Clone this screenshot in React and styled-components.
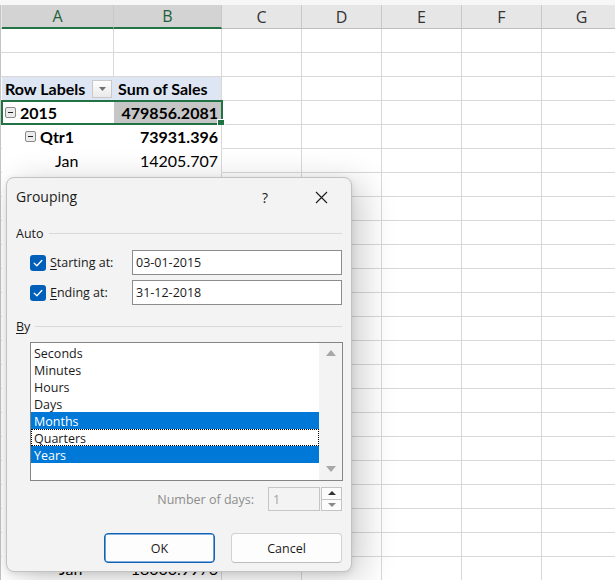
import React from 'react';
import styled, { createGlobalStyle, css } from 'styled-components';

const Global = createGlobalStyle`
  html, body { margin: 0; padding: 0; background: #fff; overflow: hidden; }
  #root { width: 615px; height: 580px; }
`;

const COLS = '2px 112px 108px 80px 80px 80px 80px 80px';
const GRID = '#d8d8d8';

const Page = styled.div`
  position: relative;
  width: 615px;
  height: 580px;
  overflow: hidden;
  background: #fff;
`;

const Sheet = styled.div`
  display: flex;
  flex-direction: column;
`;

const TopStrip = styled.div`
  height: 5px;
  background: #f7f7f7;
`;

const HeaderRow = styled.div`
  display: grid;
  grid-template-columns: ${COLS};
  height: 24px;
  background: #e6e6e6;
`;

const ColHead = styled.div`
  box-sizing: border-box;
  display: flex;
  align-items: center;
  justify-content: center;
  font-family: "Open Sans", "Noto Sans", sans-serif;
  font-size: 16px;
  border-right: 1px solid #c8c8c8;
  color: ${p => (p.$sel ? '#1f5f3c' : '#333')};
  background: ${p => (p.$sel ? '#d3d3d3' : '#e6e6e6')};
  border-bottom: ${p => (p.$sel ? '2px solid #217346' : '1px solid #bdbdbd')};
`;

const Row = styled.div`
  position: relative;
  display: grid;
  grid-template-columns: ${COLS};
  height: 24px;
`;

const Cell = styled.div`
  box-sizing: border-box;
  height: 24px;
  display: flex;
  align-items: center;
  gap: 4px;
  padding: 0 3px;
  overflow: hidden;
  white-space: nowrap;
  font-family: Lato, "Liberation Sans", Arial, sans-serif;
  font-size: 16px;
  color: #000;
  border-right: 1px solid ${GRID};
  border-bottom: 1px solid ${GRID};
  justify-content: ${p => (p.$right ? 'flex-end' : 'flex-start')};
  font-weight: ${p => (p.$bold ? 700 : 400)};
  background: ${p => p.$bg || '#fff'};
  padding-left: ${p => (p.$indent != null ? `${p.$indent}px` : '3px')};
  ${p => p.$open && css`border-right-color: transparent;`}
  ${p => p.$flat && css`border-bottom-color: transparent;`}
`;

const EdgeCell = styled.div`
  box-sizing: border-box;
  border-left: 1px solid #c4c4c4;
  border-bottom: 1px solid ${GRID};
  background: #fff;
`;

const HeadEdge = styled.div`
  box-sizing: border-box;
  border-left: 1px solid #c4c4c4;
  border-bottom: 1px solid #bdbdbd;
  background: #e6e6e6;
`;

const Selection = styled.div`
  position: absolute;
  left: 1px;
  top: -1px;
  width: 222px;
  height: 25px;
  box-sizing: border-box;
  border: 2px solid #217346;
  pointer-events: none;
`;

const FillHandle = styled.div`
  position: absolute;
  right: -4px;
  bottom: -4px;
  width: 6px;
  height: 6px;
  background: #217346;
  border: 1px solid #fff;
`;

const MinusBox = styled.span`
  position: relative;
  flex: none;
  width: 11px;
  height: 11px;
  box-sizing: border-box;
  border: 1px solid #8a8a8a;
  border-radius: 2px;
  background: #ececec;
  &::after {
    content: '';
    position: absolute;
    left: 2px;
    right: 2px;
    top: 4px;
    height: 1px;
    background: #222;
  }
`;

const LabelText = styled.span`
  flex: 1;
`;

const FilterButton = styled.span`
  flex: none;
  width: 20px;
  height: 18px;
  box-sizing: border-box;
  border: 1px solid #c9c9c9;
  background: linear-gradient(#fdfdfd, #eaeaea);
  display: flex;
  align-items: center;
  justify-content: center;
  margin-right: -2px;
`;

/* ---------- Dialog ---------- */

const Dialog = styled.div`
  position: absolute;
  left: 6px;
  top: 177px;
  width: 346px;
  box-sizing: border-box;
  background: #f3f3f3;
  border: 1px solid #c2c2c2;
  border-radius: 8px;
  box-shadow: 10px 6px 34px rgba(0, 0, 0, 0.2), 0 2px 6px rgba(0, 0, 0, 0.1);
  display: flex;
  flex-direction: column;
  font-family: "Open Sans", "Noto Sans", sans-serif;
  font-size: 12.5px;
  color: #1a1a1a;
`;

const TitleBar = styled.div`
  height: 39px;
  display: flex;
  align-items: center;
  padding: 0 18px 0 9px;
`;

const Title = styled.div`
  flex: 1;
  font-size: 14px;
  color: #1a1a1a;
  padding-bottom: 2px;
`;

const TitleButton = styled.div`
  width: 24px;
  height: 24px;
  display: flex;
  align-items: center;
  justify-content: center;
  font-size: 14px;
  color: #1a1a1a;
  margin-left: ${p => p.$gap || 0}px;
`;

const Body = styled.div`
  display: flex;
  flex-direction: column;
  padding: 0 9px 8px 9px;
`;

const GroupLabel = styled.div`
  display: flex;
  align-items: center;
  height: 16px;
  margin-top: ${p => p.$mt}px;
  &::after {
    content: '';
    flex: 1;
    height: 1px;
    background: #d9d9d9;
    margin-left: 5px;
  }
`;

const FieldRow = styled.div`
  display: flex;
  align-items: center;
  height: 25px;
  padding-left: 14px;
  margin-top: ${p => p.$mt}px;
`;

const CheckBox = styled.span`
  flex: none;
  width: 16px;
  height: 16px;
  border-radius: 3px;
  background: #005fb8;
  display: flex;
  align-items: center;
  justify-content: center;
  margin-right: 4px;
`;

const FieldLabel = styled.span`
  width: 82px;
`;

const Key = styled.span`
  text-decoration: underline;
  text-underline-offset: 2px;
`;

const TextInput = styled.div`
  flex: 1;
  height: 25px;
  box-sizing: border-box;
  border: 1px solid #8c8c8c;
  background: #fff;
  display: flex;
  align-items: center;
  padding-left: 3px;
`;

const ListBox = styled.div`
  margin: 8px -1px 0 14px;
  height: 139px;
  box-sizing: border-box;
  border: 1px solid #858585;
  background: #fff;
  display: flex;
`;

const Items = styled.div`
  flex: 1;
  padding-top: 1px;
  display: flex;
  flex-direction: column;
`;

const Item = styled.div`
  height: 17px;
  line-height: 19px;
  box-sizing: border-box;
  padding-left: 3px;
  overflow: hidden;
  ${p => p.$sel && css`background: #0078d7; color: #fff;`}
  ${p => p.$focus && css`border: 1px dotted #000; padding-left: 2px; line-height: 17px;`}
`;

const ScrollTrack = styled.div`
  width: 23px;
  background: #f3f3f3;
  display: flex;
  flex-direction: column;
  justify-content: space-between;
  align-items: center;
  padding: 7px 0 8px;
`;

const NumRow = styled.div`
  margin-top: 6px;
  height: 24px;
  display: flex;
  align-items: center;
  justify-content: flex-end;
`;

const NumLabel = styled.span`
  color: #8d8d8d;
  margin-right: 14px;
`;

const NumInput = styled.div`
  width: 52px;
  height: 24px;
  box-sizing: border-box;
  border: 1px solid #c6c6c6;
  background: #f3f3f3;
  color: #a3a3a3;
  display: flex;
  align-items: center;
  padding-left: 4px;
`;

const Spinner = styled.div`
  width: 21px;
  height: 24px;
  margin-left: 1px;
  display: flex;
  flex-direction: column;
`;

const SpinPart = styled.div`
  flex: 1;
  box-sizing: border-box;
  border: 1px solid #c4c4c4;
  ${p => p.$bottom && css`border-top: none;`}
  background: #fbfbfb;
  display: flex;
  align-items: center;
  justify-content: center;
`;

const ButtonRow = styled.div`
  margin-top: 22px;
  display: flex;
  justify-content: flex-end;
  gap: 16px;
`;

const Button = styled.div`
  width: 111px;
  height: 30px;
  box-sizing: border-box;
  border-radius: 4px;
  background: #fdfdfd;
  display: flex;
  align-items: center;
  justify-content: center;
  border: 1px solid ${p => (p.$primary ? '#0f63b5' : '#d2d2d2')};
  ${p => p.$primary && css`box-shadow: inset 0 0 0 0.6px #0f63b5;`}
  ${p => !p.$primary && css`border-bottom-color: #bcbcbc;`}
`;

const Triangle = ({ up, color, w = 9, h = 5 }) => (
  <svg width={w} height={h} viewBox={`0 0 ${w} ${h}`}>
    <polygon
      points={up ? `0,${h} ${w / 2},0 ${w},${h}` : `0,0 ${w},0 ${w / 2},${h}`}
      fill={color}
    />
  </svg>
);

const Check = () => (
  <svg width="12" height="12" viewBox="0 0 12 12">
    <polyline points="2.2,6.3 4.9,8.8 9.8,3.5" fill="none" stroke="#fff" strokeWidth="1.3" strokeLinecap="round" strokeLinejoin="round" />
  </svg>
);

const CloseIcon = () => (
  <svg width="13" height="13" viewBox="0 0 13 13">
    <path d="M1 1 L12 12 M12 1 L1 12" stroke="#1a1a1a" strokeWidth="1.1" fill="none" />
  </svg>
);

const extraCols = () => [0, 1, 2, 3, 4].map(i => <Cell key={`x${i}`} />);

export default function App() {
  const plainRows = Array.from({ length: 16 }, (_, i) => i);
  const items = ['Seconds', 'Minutes', 'Hours', 'Days', 'Months', 'Quarters', 'Years'];
  return (
    <Page>
      <Global />
      <Sheet>
        <TopStrip />
        <HeaderRow>
          <HeadEdge />
          <ColHead $sel>A</ColHead>
          <ColHead $sel>B</ColHead>
          <ColHead>C</ColHead>
          <ColHead>D</ColHead>
          <ColHead>E</ColHead>
          <ColHead>F</ColHead>
          <ColHead>G</ColHead>
        </HeaderRow>
        <Row>
          <EdgeCell />
          <Cell />
          <Cell />
          {extraCols()}
        </Row>
        <Row>
          <EdgeCell />
          <Cell />
          <Cell />
          {extraCols()}
        </Row>
        <Row>
          <EdgeCell />
          <Cell $bold $open $flat $bg="#dde6f2">
            <LabelText>Row Labels</LabelText>
            <FilterButton>
              <Triangle color="#707070" w={7} h={4} />
            </FilterButton>
          </Cell>
          <Cell $bold $flat $bg="#dde6f2" $indent={4}>Sum of Sales</Cell>
          {extraCols()}
        </Row>
        <Row>
          <EdgeCell />
          <Cell $bold $open $flat>
            <MinusBox />
            2015
          </Cell>
          <Cell $bold $right $flat $bg="#c6c6c6">479856.2081</Cell>
          {extraCols()}
          <Selection>
            <FillHandle />
          </Selection>
        </Row>
        <Row>
          <EdgeCell />
          <Cell $bold $open $flat $indent={23}>
            <MinusBox />
            Qtr1
          </Cell>
          <Cell $bold $right $flat>73931.396</Cell>
          {extraCols()}
        </Row>
        <Row>
          <EdgeCell />
          <Cell $open $flat $indent={53}>Jan</Cell>
          <Cell $right $flat>14205.707</Cell>
          {extraCols()}
        </Row>
        {plainRows.map(r => (
          <Row key={r}>
            <EdgeCell />
            <Cell $open $flat />
            <Cell $flat />
            {extraCols()}
          </Row>
        ))}
        <Row>
          <EdgeCell />
          <Cell $open $flat $indent={57}>Jan</Cell>
          <Cell $right $flat>18000.9976</Cell>
          {extraCols()}
        </Row>
      </Sheet>

      <Dialog>
        <TitleBar>
          <Title>Grouping</Title>
          <TitleButton>?</TitleButton>
          <TitleButton $gap={32}>
            <CloseIcon />
          </TitleButton>
        </TitleBar>
        <Body>
          <GroupLabel $mt={8}>Auto</GroupLabel>
          <FieldRow $mt={9}>
            <CheckBox><Check /></CheckBox>
            <FieldLabel><Key>S</Key>tarting at:</FieldLabel>
            <TextInput>03-01-2015</TextInput>
          </FieldRow>
          <FieldRow $mt={5}>
            <CheckBox><Check /></CheckBox>
            <FieldLabel><Key>E</Key>nding at:</FieldLabel>
            <TextInput>31-12-2018</TextInput>
          </FieldRow>
          <GroupLabel $mt={13}><span><Key>B</Key>y</span></GroupLabel>
          <ListBox>
            <Items>
              {items.map(it => (
                <Item key={it} $sel={it === 'Months' || it === 'Years'} $focus={it === 'Quarters'}>
                  {it}
                </Item>
              ))}
            </Items>
            <ScrollTrack>
              <Triangle up color="#a8a8a8" w={10} h={6} />
              <Triangle color="#a8a8a8" w={10} h={6} />
            </ScrollTrack>
          </ListBox>
          <NumRow>
            <NumLabel>Number of days:</NumLabel>
            <NumInput>1</NumInput>
            <Spinner>
              <SpinPart>
                <Triangle up color="#333" w={8} h={4} />
              </SpinPart>
              <SpinPart $bottom>
                <Triangle color="#8a8a8a" w={8} h={4} />
              </SpinPart>
            </Spinner>
          </NumRow>
          <ButtonRow>
            <Button $primary>OK</Button>
            <Button>Cancel</Button>
          </ButtonRow>
        </Body>
      </Dialog>
    </Page>
  );
}
